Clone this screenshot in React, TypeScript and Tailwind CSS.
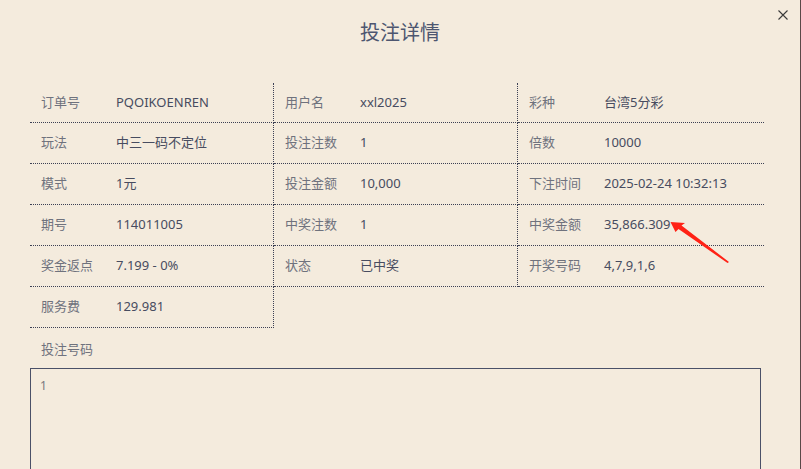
import React from "react";

const items: [string, string][] = [
  ["订单号", "PQOIKOENREN"],
  ["用户名", "xxl2025"],
  ["彩种", "台湾5分彩"],
  ["玩法", "中三一码不定位"],
  ["投注注数", "1"],
  ["倍数", "10000"],
  ["模式", "1元"],
  ["投注金额", "10,000"],
  ["下注时间", "2025-02-24 10:32:13"],
  ["期号", "114011005"],
  ["中奖注数", "1"],
  ["中奖金额", "35,866.309"],
  ["奖金返点", "7.199 - 0%"],
  ["状态", "已中奖"],
  ["开奖号码", "4,7,9,1,6"],
  ["服务费", "129.981"],
];

function Cell({ label, value, index }: { label: string; value: string; index: number }) {
  const col = index % 3;
  const height = index < 3 ? "h-[40px]" : "h-[41px]";
  const width = col === 2 ? "w-[246px]" : "w-[244px]";
  const right = col === 2 ? "" : "border-r";
  return (
    <div
      className={`${width} ${height} ${right} flex items-center border-b border-dotted border-[#3c4054] pl-[11px] text-[13px]`}
    >
      <span className="w-[75px] shrink-0 text-[#6f727d]">{label}</span>
      <span className="text-[#474c60]">{value}</span>
    </div>
  );
}

export default function App() {
  return (
    <div
      className="relative w-[801px] h-[469px] overflow-hidden bg-[#f4ebdd] border-r border-[#5a4848]"
      style={{ fontFamily: '"Noto Sans", "Noto Sans CJK SC", sans-serif' }}
    >
      <button className="absolute left-[778px] top-[10px] w-[10px] h-[10px]">
        <svg width="10" height="10" viewBox="0 0 10 10">
          <path d="M0.5 0.5 L9.5 9.5 M9.5 0.5 L0.5 9.5" stroke="#3a3a3a" strokeWidth="1.1" />
        </svg>
      </button>

      <h1 className="pt-[19px] h-[47px] text-center text-[20px] leading-[28px] text-[#4d5670]">投注详情</h1>

      <div className="ml-[30px] mt-[36px] w-[734px] flex flex-wrap">
        {items.map(([l, v], i) => (
          <Cell key={l} label={l} value={v} index={i} />
        ))}
      </div>

      <div className="ml-[41px] mt-[11px] h-[20px] leading-[20px] text-[13px] text-[#6f727d]">投注号码</div>

      <div className="ml-[30px] mt-[9px] w-[731px] h-[110px] border border-[#4a5068] px-[9px] pt-[8px] text-[12px] text-[#7a7a80]">
        1
      </div>

      <svg className="absolute left-0 top-0 pointer-events-none" width="801" height="469">
        <polygon
          points="670.5,222 685,223 681.5,225.5 729,262 727.5,263 678.5,229 675.5,232"
          fill="#ff2216"
        />
      </svg>
    </div>
  );
}
